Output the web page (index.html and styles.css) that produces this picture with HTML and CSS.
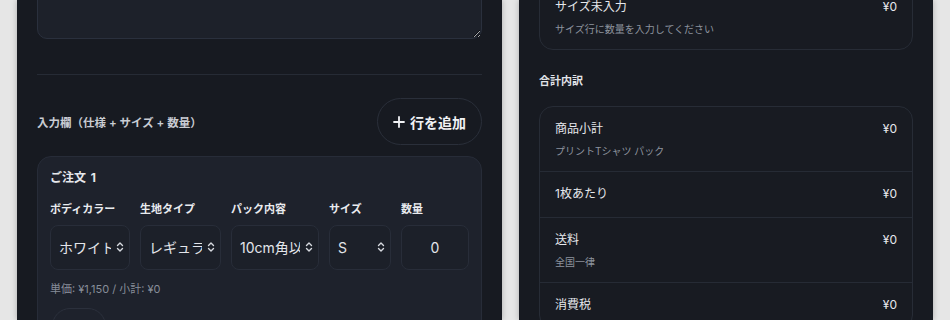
FILE: index.html
```html
<!DOCTYPE html>
<html lang="ja">
<head>
    <meta charset="UTF-8">
    <meta name="viewport" content="width=device-width, initial-scale=1.0">
    <title>プリントTシャツ 注文</title>
    <link rel="stylesheet" href="styles.css">
</head>
<body>
    <div class="page">
        <section class="panel form_panel">
            <textarea class="memo" aria-label="備考"></textarea>
            <hr class="divider">
            <div class="rows_head">
                <div class="rows_label">入力欄（仕様 + サイズ + 数量）</div>
                <button class="addbtn">
                    <svg viewBox="0 0 12 12" width="12" height="12">
                        <path d="M6 1v10M1 6h10" stroke="currentColor" stroke-width="1.8" stroke-linecap="round"/>
                    </svg>
                    行を追加
                </button>
            </div>
            <div class="order_card">
                <div class="order_title">ご注文 1</div>
                <div class="order_grid">
                    <div class="flabel">ボディカラー</div>
                    <div class="flabel">生地タイプ</div>
                    <div class="flabel">パック内容</div>
                    <div class="flabel">サイズ</div>
                    <div class="flabel">数量</div>

                    <div class="select_wrap">
                        <select class="field">
                            <option>ホワイト</option>
                            <option>ブラック</option>
                        </select>
                        <svg class="chev" viewBox="0 0 8 12"><path d="M1.5 4.5L4 2l2.5 2.5M1.5 7.5L4 10l2.5-2.5"/></svg>
                    </div>
                    <div class="select_wrap">
                        <select class="field">
                            <option>レギュラー</option>
                            <option>ヘビー</option>
                        </select>
                        <svg class="chev" viewBox="0 0 8 12"><path d="M1.5 4.5L4 2l2.5 2.5M1.5 7.5L4 10l2.5-2.5"/></svg>
                    </div>
                    <div class="select_wrap">
                        <select class="field">
                            <option>10cm角以内</option>
                            <option>A4以内</option>
                        </select>
                        <svg class="chev" viewBox="0 0 8 12"><path d="M1.5 4.5L4 2l2.5 2.5M1.5 7.5L4 10l2.5-2.5"/></svg>
                    </div>
                    <div class="select_wrap">
                        <select class="field">
                            <option>S</option>
                            <option>M</option>
                            <option>L</option>
                            <option>XL</option>
                        </select>
                        <svg class="chev" viewBox="0 0 8 12"><path d="M1.5 4.5L4 2l2.5 2.5M1.5 7.5L4 10l2.5-2.5"/></svg>
                    </div>
                    <input class="field qty" type="text" value="0" aria-label="数量">
                </div>
                <div class="price_note">単価: ¥1,150 / 小計: ¥0</div>
                <button class="delbtn" aria-label="行を削除">
                    <svg viewBox="0 0 14 14" width="14" height="14">
                        <path d="M3 4h8M5.5 4V2.8h3V4M4.2 4l.6 7.5h4.4l.6-7.5" fill="none" stroke="currentColor" stroke-width="1.3" stroke-linejoin="round"/>
                    </svg>
                </button>
            </div>
        </section>

        <section class="panel summary_panel">
            <div class="sum_card top_card">
                <div class="sum_row">
                    <div class="sum_main">
                        <span>サイズ未入力</span>
                        <span>¥0</span>
                    </div>
                    <div class="sum_sub">サイズ行に数量を入力してください</div>
                </div>
            </div>

            <div class="sum_heading">合計内訳</div>

            <div class="sum_card">
                <div class="sum_row">
                    <div class="sum_main"><span>商品小計</span><span>¥0</span></div>
                    <div class="sum_sub">プリントTシャツ パック</div>
                </div>
                <div class="sum_row">
                    <div class="sum_main"><span>1枚あたり</span><span>¥0</span></div>
                </div>
                <div class="sum_row">
                    <div class="sum_main"><span>送料</span><span>¥0</span></div>
                    <div class="sum_sub">全国一律</div>
                </div>
                <div class="sum_row">
                    <div class="sum_main"><span>消費税</span><span>¥0</span></div>
                </div>
            </div>
        </section>
    </div>
</body>
</html>
```

FILE: styles.css
```css
* {
    box-sizing: border-box;
}
body {
    margin: 0;
    background-color: #e6e6e6;
    font-family: "Inter", "Noto Sans CJK JP", sans-serif;
    color: #e6e8ec;
    overflow: hidden;
}
.page {
    display: flex;
    gap: 17px;
    padding: 0 17px;
    height: 320px;
}
.panel {
    background-color: #171a21;
    padding: 0 20px;
    box-shadow: 0 0 6px rgba(0, 0, 0, 0.25);
    overflow: hidden;
}
.form_panel {
    width: 485px;
}
.summary_panel {
    width: 414px;
}

/* left column */
.memo {
    display: block;
    width: 100%;
    height: 80px;
    margin-top: -41px;
    background-color: #1d212a;
    border: 1px solid #2a303d;
    border-radius: 10px;
    color: #e6e8ec;
}
.divider {
    margin: 35px 0 0;
    border: 0;
    border-top: 1px solid #262b35;
}
.rows_head {
    display: flex;
    align-items: center;
    justify-content: space-between;
    padding-top: 23px;
}
.rows_label {
    font-size: 11.5px;
    font-weight: 600;
    color: #c9ccd3;
}
.addbtn {
    display: inline-flex;
    align-items: center;
    gap: 5px;
    height: 47px;
    padding: 0 15px;
    background-color: #171a21;
    border: 1px solid #2a2f3a;
    border-radius: 24px;
    color: #f1f2f5;
    font-family: inherit;
    font-size: 14px;
    font-weight: 700;
}
.order_card {
    margin-top: 11px;
    padding: 11px 12px 0;
    height: 200px;
    background-color: #1e222c;
    border: 1px solid #272c38;
    border-radius: 14px;
}
.order_title {
    font-size: 12px;
    font-weight: 700;
    line-height: 20px;
    word-spacing: 2px;
}
.order_grid {
    display: grid;
    grid-template-columns: 80px 81px 88px 62px 1fr;
    column-gap: 10px;
    row-gap: 7px;
    margin-top: 12px;
}
.flabel {
    font-size: 11px;
    font-weight: 700;
    line-height: 18px;
    color: #e9ebef;
}
.select_wrap {
    position: relative;
}
.field {
    display: block;
    width: 100%;
    height: 45px;
    background-color: #1c2029;
    border: 1px solid #282d39;
    border-radius: 8px;
    color: #e3e5ea;
    font-family: inherit;
    font-size: 14px;
}
select.field {
    appearance: none;
    padding: 0 18px 0 8px;
}
.chev {
    position: absolute;
    right: 6px;
    top: 16px;
    width: 8px;
    height: 12px;
    fill: none;
    stroke: #d6d9df;
    stroke-width: 1.4;
    stroke-linecap: round;
    stroke-linejoin: round;
    pointer-events: none;
}
.qty {
    text-align: center;
    padding: 0 6px;
}
.price_note {
    margin-top: 11px;
    font-size: 11px;
    line-height: 16px;
    color: #878d99;
}
.delbtn {
    display: flex;
    align-items: center;
    justify-content: center;
    margin-top: 11px;
    margin-left: 2px;
    width: 54px;
    height: 36px;
    background: transparent;
    border: 1px solid #2b303c;
    border-radius: 18px;
    color: #9aa0ab;
}

/* right column */
.sum_card {
    background-color: #181b22;
    border: 1px solid #272c36;
    border-radius: 14px;
}
.top_card {
    margin-top: -16px;
}
.sum_row {
    padding: 12px 15px;
    border-top: 1px solid #262b35;
}
.sum_row:first-child {
    border-top: 0;
}
.sum_main {
    display: flex;
    justify-content: space-between;
    font-size: 12px;
    line-height: 19px;
    color: #e6e8ec;
}
.sum_main + .sum_sub {
    margin-top: 6px;
}
.sum_row:not(:has(.sum_sub)) {
    padding-bottom: 14px;
}
.sum_sub {
    font-size: 10px;
    line-height: 15px;
    color: #8d939e;
}
.sum_heading {
    margin: 23px 0 17px;
    font-size: 11px;
    font-weight: 700;
    line-height: 16px;
    color: #e1e3e8;
}
```
